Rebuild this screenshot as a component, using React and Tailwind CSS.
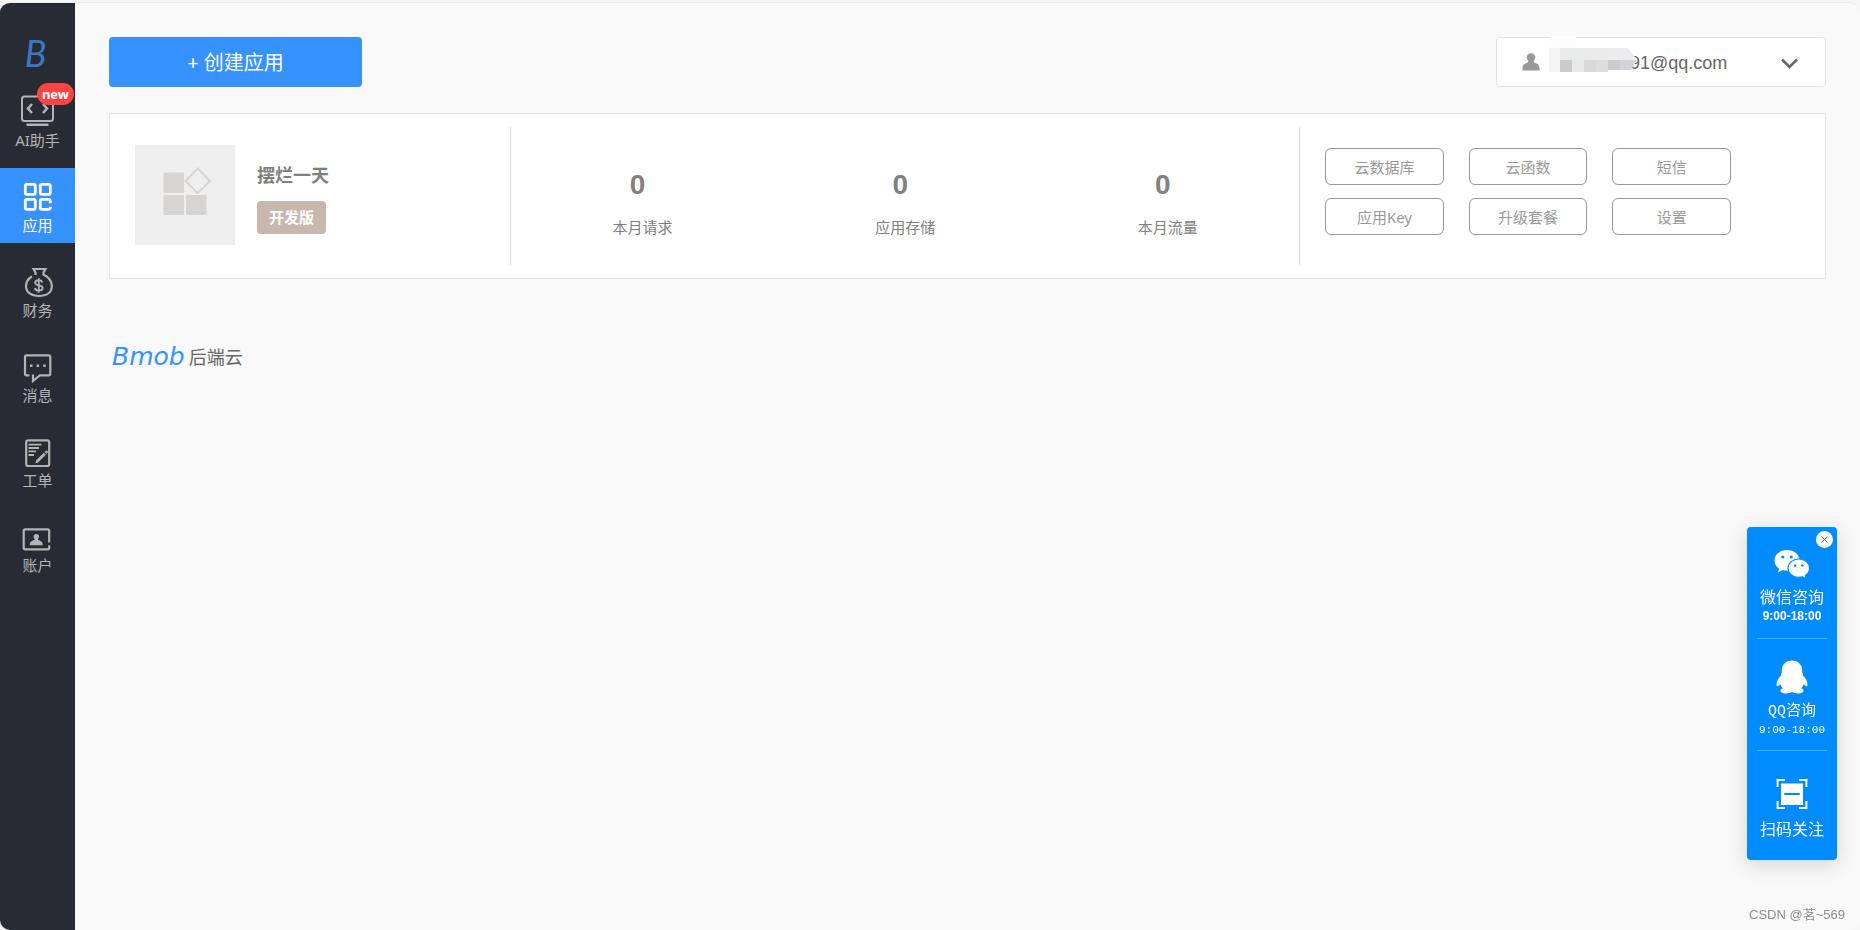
import { useState } from "react"

const AssistantIcon = () => (
  <svg width="35" height="34" viewBox="0 0 35 34" fill="none" stroke="currentColor" strokeWidth="2">
    <rect x="2" y="1.5" width="31" height="24.5" rx="2.5" />
    <path d="M12 9 8 13.500l4 4.500M23 9l4 4.500-4 4.500" strokeWidth="2.600" />
    <path d="M6.500 29.800h22" strokeWidth="2.400" />
  </svg>
)

const AppsIcon = () => (
  <svg width="35" height="34" viewBox="0 0 35 34" fill="none" stroke="currentColor" strokeWidth="2.8">
    <rect x="5.3" y="4.300" width="10" height="10" rx="1.500" />
    <rect x="20.300" y="4.300" width="10" height="10" rx="1.500" />
    <rect x="5.300" y="19.300" width="10" height="10" rx="1.500" />
    <path d="M30.300 23.300v-2.500a1.500 1.500 0 0 0-1.500-1.500h-7a1.500 1.500 0 0 0-1.500 1.500v7a1.500 1.500 0 0 0 1.500 1.500h7a1.500 1.500 0 0 0 1.500-1.500v-1" />
  </svg>
)

const FinanceIcon = () => (
  <svg width="35" height="34" viewBox="0 0 35 34" fill="none" stroke="currentColor" strokeWidth="2.200">
    <path d="M12 11.500C8.500 13.500 6 17 6 21c0 6.500 5.500 10 13 10s12.800-3.500 12.800-10c0-5-3.500-9-8.300-11.500V7.500L25.500 4h-12l2 3.500v2.500" />
    <path d="M22.300 17.500c-.4-1.700-1.800-2.300-3.600-2.300-2 0-3.500.9-3.500 2.600 0 3.600 7.400 1.500 7.400 5.200 0 1.800-1.700 2.700-3.700 2.700s-3.700-.8-4-2.700M18.800 13.200v14.600" strokeWidth="1.800" />
  </svg>
)

const MessageIcon = () => (
  <svg width="35" height="34" viewBox="0 0 35 34" fill="none" stroke="currentColor" strokeWidth="2.200">
    <path d="M9.500 25.300H6.500A1.500 1.500 0 0 1 5 23.800V6.800a1.500 1.500 0 0 1 1.500-1.500h22.300a1.500 1.500 0 0 1 1.500 1.500v17a1.500 1.500 0 0 1-1.500 1.500h-9L13 31v-6.500" />
    <path d="M10 15.800h2.500M16.600 15.800h2.500M23.200 15.800h2.500" strokeWidth="2.500" />
  </svg>
)

const TicketIcon = () => (
  <svg width="35" height="34" viewBox="0 0 35 34" fill="none" stroke="currentColor" strokeWidth="2.200">
    <rect x="6.200" y="5.300" width="23" height="25.700" rx="2" />
    <path d="M8.500 9.700h13M8.500 13h10.500M8.500 16.300h7.500M8.500 20h5.500" strokeWidth="1.800" />
    <path d="M17 26.500l7.800-7.800" strokeWidth="3" />
    <path d="M25.500 18l1.800-1.800" strokeWidth="2.600" />
    <path d="M15.400 28.200l.8-3 2.200 2.200z" fill="currentColor" stroke="none" />
  </svg>
)

const AccountIcon = () => (
  <svg width="35" height="34" viewBox="0 0 35 34" fill="none" stroke="currentColor" strokeWidth="2.200">
    <path d="M29.200 22.500V10.800a1.500 1.500 0 0 0-1.500-1.500H5.200a1.500 1.500 0 0 0-1.500 1.500v17a1.500 1.500 0 0 0 1.500 1.500h22.500a1.500 1.500 0 0 0 1.500-1.500v-2.500" />
    <circle cx="16.300" cy="16.800" r="2.700" fill="currentColor" stroke="none" />
    <path d="M15 18.500h2.600c.2 1.300 1 1.700 2.500 2.200 1.900.7 2.600 1.900 2.700 4.500h-13c.1-2.600.8-3.800 2.700-4.500 1.500-.5 2.300-.9 2.500-2.200z" fill="currentColor" stroke="none" />
  </svg>
)

const UserIcon = () => (
  <svg width="18" height="18" viewBox="0 0 18 18" fill="#999999">
    <circle cx="9" cy="4.500" r="4.300" />
    <path d="M6.500 7.500h5c.2 1.800 1.200 2.300 3 3.100 2.200 1 3 2.300 3 5.400v1.500H.5V16c0-3.100.8-4.400 3-5.400 1.800-.8 2.800-1.300 3-3.100z" />
  </svg>
)

const AppPlaceholder = () => (
  <svg className="shrink-0 bg-[#efefef]" width="100" height="100" viewBox="0 0 100 100" fill="#d6d5d3">
    <rect x="28.500" y="27.500" width="20.500" height="20.500" rx="1" />
    <rect x="28.500" y="50" width="20.500" height="20" rx="1" />
    <rect x="51" y="50" width="20.500" height="20" rx="1" />
    <path d="M62.700 23.500 75 36 62.700 48.200 50.500 36z" fill="none" stroke="#d6d5d3" strokeWidth="2" />
  </svg>
)

const WechatIcon = () => (
  <svg width="36" height="30" viewBox="0 0 36 30" fill="#ffffff">
    <path d="M13 1C6 1 .5 5.600.5 11.500c0 3.300 1.700 6.200 4.500 8.100l-1 3.900 4.600-2.400c1.400.4 2.900.6 4.400.6C20 21.700 25.500 17.300 25.500 11.500S20 1 13 1z" />
    <path d="M24.800 10c-6 0-10.800 4-10.800 9.200s4.800 9.200 10.800 9.200c1.300 0 2.500-.2 3.700-.5l3.500 1.800-.7-3.200c2.500-1.700 4.300-4.300 4.300-7.300 0-5.200-4.800-9.200-10.800-9.200z" stroke="#008cff" strokeWidth="1.200" />
    <g fill="#008cff">
      <circle cx="8.700" cy="8" r="1.600" />
      <circle cx="17.300" cy="8" r="1.600" />
      <circle cx="21.200" cy="16.500" r="1.300" />
      <circle cx="28.400" cy="16.500" r="1.300" />
    </g>
  </svg>
)

const QQIcon = () => (
  <svg width="32" height="34" viewBox="0 0 32 34" fill="#ffffff">
    <path d="M16 .5C9.500.5 5.800 5 5.800 10.500v2.300c-.8.8-1 1.800-.8 2.700C2.500 18 .5 21.500.5 24.300c0 1.700.6 2.200 1.300 2 .9-.3 1.700-1.400 2.300-2.600.5 1.800 1.400 3.300 2.700 4.600-1.400.5-2.300 1.300-2.300 2.400 0 1.800 2.400 2.800 5.500 2.800 2.600 0 4.700-.7 6-1.400 1.300.7 3.400 1.400 6 1.400 3.100 0 5.500-1 5.500-2.800 0-1.100-.9-1.900-2.300-2.400 1.300-1.300 2.200-2.800 2.700-4.600.6 1.200 1.400 2.300 2.300 2.600.7.200 1.300-.3 1.300-2 0-2.800-2-6.300-4.500-8.800.2-.9 0-1.900-.8-2.700v-2.300C26.200 5 22.500.5 16 .5z" />
  </svg>
)

const ScanIcon = () => (
  <svg width="32" height="32" viewBox="0 0 32 32" fill="none" stroke="#ffffff" strokeWidth="2">
    <path d="M1.600 9V2.100h7.200M23.200 2.100h7.200V9M30.400 23v7h-7.200M8.800 30H1.600v-7" />
    <rect x="5" y="5.500" width="22" height="21.500" fill="#ffffff" stroke="none" />
    <path d="M8.200 16h15.600" stroke="#008cff" />
  </svg>
)

const navItems = [
  { label: "AI助手", icon: AssistantIcon, badge: "new" },
  { label: "应用", icon: AppsIcon, active: true },
  { label: "财务", icon: FinanceIcon },
  { label: "消息", icon: MessageIcon },
  { label: "工单", icon: TicketIcon },
  { label: "账户", icon: AccountIcon },
]

const stats = [
  { label: "本月请求", value: 0 },
  { label: "应用存储", value: 0 },
  { label: "本月流量", value: 0 },
]

const actions = ["云数据库", "云函数", "短信", "应用Key", "升级套餐", "设置"]

const Sidebar = () => (
  <nav className="w-[75px] shrink-0 bg-[#282b33]">
    <a
      href="#"
      className="flex h-20 items-center justify-center pr-1 pt-5 font-['Lato'] text-4xl italic text-[#3a78c3]"
    >
      B
    </a>
    <ul className="flex flex-col gap-2.5">
      {navItems.map(({ label, icon: Icon, badge, active }) => (
        <li key={label}>
          <a
            href="#"
            className={`relative flex h-[75px] flex-col items-center pt-3 ${
              active ? "bg-[#3592ff] text-white" : "text-[#b3b3b3]"
            }`}
          >
            <Icon />
            <span className="mt-px text-[15px] leading-5">{label}</span>
            {badge && (
              <span className="absolute right-px top-0 rounded-full bg-[#ff4343] px-[5px] text-[13px] font-bold leading-[22px] text-white">
                {badge}
              </span>
            )}
          </a>
        </li>
      ))}
    </ul>
  </nav>
)

const AccountMenu = () => (
  <button
    aria-haspopup="menu"
    className="flex h-[50px] w-[330px] items-center rounded border border-[#e5e5e5] bg-white pl-[25px] pr-[27px]"
  >
    <UserIcon />
    {/* Masked part of the address */}
    <svg className="relative ml-[9px] shrink-0 overflow-visible" width="88" height="48" viewBox="0 2 88 48">
      <path d="M2 0h25v12H2z" fill="#fcfcfc" />
      <path d="M0 12h11v24H0z" fill="#f5f5f4" />
      <path d="M11 12h24v12H11z" fill="#e9ebeb" />
      <path d="M35 12h24v12H35z" fill="#ebebeb" />
      <path d="M59 12h20l9 12H59z" fill="#ececee" />
      <path d="M11 24h12v12H11z" fill="#cccaca" />
      <path d="M23 24h12v12H23z" fill="#e9e9e9" />
      <path d="M35 24h12v12H35z" fill="#d8d8d6" />
      <path d="M47 24h12v12H47z" fill="#dddddb" />
      <path d="M59 24h12v10H59z" fill="#cdcbcb" />
      <path d="M71 24h17l-6 10H71z" fill="#d2d4d9" />
    </svg>
    <span className="-ml-[7px] pt-0.5 font-['Liberation_Sans'] text-lg text-[#666666]">91@qq.com</span>
    <svg className="ml-auto mt-0.5" width="17" height="11" viewBox="0 0 17 11" fill="none" stroke="#666666" strokeWidth="2.500">
      <path d="M1 1.500 8.500 9 16 1.500" />
    </svg>
  </button>
)

const AppCard = () => (
  <section className="mt-[26px] flex border border-[#e5e5e5] bg-white py-[13px]">
    <div className="flex w-[23.4%] items-center border-r border-[#dcdcdc] pb-0.5 pl-[25px]">
      <AppPlaceholder />
      <div className="ml-[22px] flex flex-col items-start gap-3.5 pt-1.5">
        <h2 className="text-lg font-bold leading-6 text-[#808080]">摆烂一天</h2>
        <span className="rounded bg-[#c7b7ac] px-3 text-[15px] font-bold leading-[33px] text-white">开发版</span>
      </div>
    </div>

    <dl className="grid w-[46%] grid-cols-3 border-r border-[#dcdcdc] pb-6 pt-[42px] text-center text-[#808080]">
      {stats.map((stat) => (
        <div key={stat.label} className="flex flex-col-reverse justify-end gap-3.5">
          <dt className="text-[15px] leading-6">{stat.label}</dt>
          <dd className="pr-2.5 font-['Liberation_Sans'] text-[28px] font-bold leading-8">{stat.value}</dd>
        </div>
      ))}
    </dl>

    <div className="grid flex-1 grid-cols-3 content-start gap-x-[25px] gap-y-[13px] pb-[30px] pl-[25px] pr-[94px] pt-[21px]">
      {actions.map((action) => (
        <button key={action} className="h-[37px] rounded-md border border-[#999999] pt-px text-[15px] text-[#999999]">
          {action}
        </button>
      ))}
    </div>
  </section>
)

const ContactPanel = ({ onClose }) => (
  <aside className="fixed bottom-[70px] right-[23px] flex w-[90px] flex-col rounded bg-[#008cff] px-2.5 text-center text-white shadow-[0_5px_20px_rgba(0,0,0,0.15)]">
    <button
      aria-label="关闭"
      onClick={onClose}
      className="absolute right-1 top-1 flex size-[17px] items-center justify-center rounded-full bg-white"
    >
      <svg width="7" height="7" viewBox="0 0 7 7" stroke="#666666">
        <path d="M.5.5l6 6M6.500.5l-6 6" />
      </svg>
    </button>
    <a href="#" className="flex h-28 flex-col items-center border-b border-[#4dafff] pt-[22px]">
      <WechatIcon />
      <span className="mt-2 whitespace-nowrap text-base leading-5">微信咨询</span>
      <span className="font-['Liberation_Sans'] text-xs font-bold leading-[18px]">9:00-18:00</span>
    </a>
    <a href="#" className="flex h-28 flex-col items-center border-b border-[#4dafff] pt-[21px]">
      <QQIcon />
      <span className="mt-2 whitespace-nowrap font-['Liberation_Mono','Noto_Sans_CJK_SC',monospace] text-[15px] leading-5">
        QQ咨询
      </span>
      <span className="font-['Liberation_Mono'] text-[11px] leading-4">9:00-18:00</span>
    </a>
    <a href="#" className="flex h-[109px] flex-col items-center pt-[27px]">
      <ScanIcon />
      <span className="mt-[9px] whitespace-nowrap text-base leading-5">扫码关注</span>
    </a>
  </aside>
)

const App = () => {
  const [showContact, setShowContact] = useState(true)

  return (
    <div className="flex min-h-screen flex-col bg-[#f6f6f6] pt-0.5 font-['Noto_Sans','Noto_Sans_CJK_SC',sans-serif]">
      <div className="flex flex-1 overflow-hidden rounded-[10px] border-t border-[#ebebeb] bg-[#f9f9f9]">
        <Sidebar />

        <main className="flex flex-1 flex-col px-[34px] pt-[34px]">
          <header className="flex items-center justify-between">
            <button className="h-[50px] w-[253px] rounded bg-[#3592ff] pt-0.5 text-xl text-white">+ 创建应用</button>
            <AccountMenu />
          </header>

          <AppCard />

          <footer className="mt-[60px] flex items-center gap-1 pl-[3px] text-lg text-[#666666]">
            <span className="font-['DejaVu_Sans'] text-[25px] italic leading-9 text-[#3592ff]">Bmob</span>
            <span>后端云</span>
          </footer>
        </main>
      </div>

      {showContact && <ContactPanel onClose={() => setShowContact(false)} />}
      <span className="fixed bottom-[5px] right-[15px] font-['Liberation_Sans','Noto_Sans_CJK_SC',sans-serif] text-[13px] leading-5 text-[#8c8c8c]">
        CSDN @茗~569
      </span>
    </div>
  )
}

export default App
